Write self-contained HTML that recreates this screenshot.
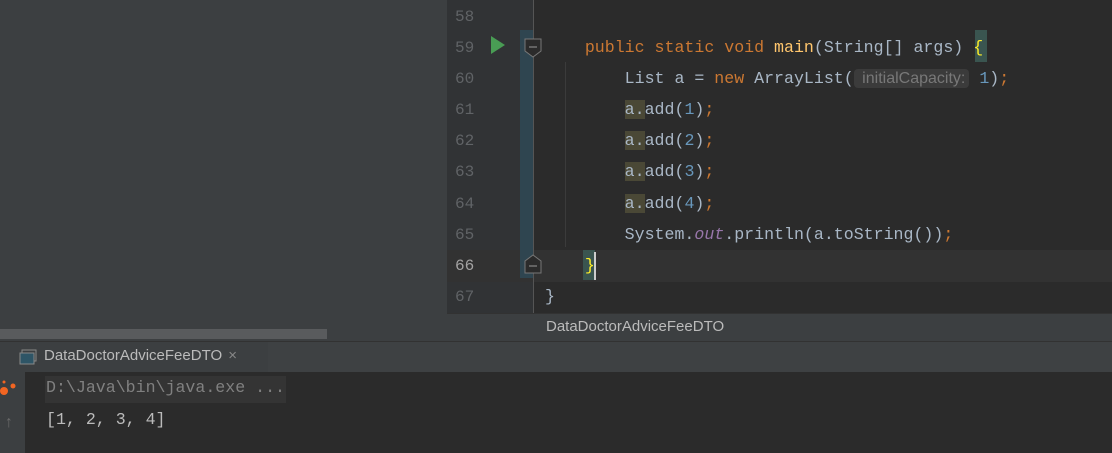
<!DOCTYPE html>
<html><head><style>
body{margin:0;width:1112px;height:453px;overflow:hidden;background:#2b2b2b;position:relative;font-family:"Liberation Mono",monospace}
div{position:absolute;box-sizing:border-box}
.ln{left:446px;width:60px;color:#606366;font-size:16px;text-align:left;padding-left:9px}
.cl{font-size:16.6px;color:#a9b7c6;white-space:pre;left:545px}
.k{color:#cc7832}.n{color:#6897bb}.f{color:#ffc66d}
.hl{background:#4a4836}
</style></head><body>
<div style="left:0;top:0;width:447px;height:341px;background:#3c3f41"></div>
<div style="left:0;top:329px;width:327px;height:10px;background:#595b5d"></div>
<div style="left:447px;top:0;width:86px;height:313px;background:#313335"></div>
<div style="left:447px;top:250px;width:665px;height:32px;background:#323232"></div>
<div style="left:520px;top:30px;width:13px;height:248px;background:#2f4550"></div>
<div style="left:533px;top:0;width:1px;height:313px;background:#555"></div>
<div style="left:565px;top:62px;width:1px;height:185px;background:#3b3b3b"></div>
<div style="left:583px;top:250px;width:12px;height:30px;background:#3a5550"></div>
<div style="left:594px;top:252px;width:2px;height:28px;background:#ccc"></div>
<div style="left:975px;top:30px;width:12px;height:32px;background:#3a5550"></div>
<svg style="position:absolute;left:490px;top:36px" width="16" height="18"><polygon points="1,0 15,9 1,18" fill="#499c54"/></svg>
<svg style="position:absolute;left:524px;top:38px" width="18" height="20"><path d="M1,1H17V13L9,19L1,13Z" fill="#2b2b2b" stroke="#777"/><line x1="5" y1="9" x2="13" y2="9" stroke="#999"/></svg>
<svg style="position:absolute;left:524px;top:254px" width="18" height="20"><path d="M1,19H17V7L9,1L1,7Z" fill="#2b2b2b" stroke="#777"/><line x1="5" y1="12" x2="13" y2="12" stroke="#999"/></svg>
<div class="ln" style="top:8px">58</div>
<div class="ln" style="top:39px">59</div>
<div class="ln" style="top:70px">60</div>
<div class="ln" style="top:101px">61</div>
<div class="ln" style="top:132px">62</div>
<div class="ln" style="top:163px">63</div>
<div class="ln" style="top:195px">64</div>
<div class="ln" style="top:226px">65</div>
<div class="ln" style="top:257px;color:#a4a3a3">66</div>
<div class="ln" style="top:288px">67</div>
<div class="cl" style="top:38px">    <span class="k">public static void </span><span class="f">main</span>(String[] args) <span style="color:#ffef28">{</span></div>
<div class="cl" style="top:69px">        List a = <span class="k">new </span>ArrayList(<span style="font-family:'Liberation Sans',sans-serif;font-size:16px;color:#787878;background:#3b3b3b;border-radius:4px;padding:1px 4px"> initialCapacity:</span> <span class="n">1</span>)<span class="k">;</span></div>
<div class="cl" style="top:100px">        <span class="hl">a.</span>add(<span class="n">1</span>)<span class="k">;</span></div>
<div class="cl" style="top:131px">        <span class="hl">a.</span>add(<span class="n">2</span>)<span class="k">;</span></div>
<div class="cl" style="top:162px">        <span class="hl">a.</span>add(<span class="n">3</span>)<span class="k">;</span></div>
<div class="cl" style="top:194px">        <span class="hl">a.</span>add(<span class="n">4</span>)<span class="k">;</span></div>
<div class="cl" style="top:225px">        System.<i style="color:#9876aa">out</i>.println(a.toString())<span class="k">;</span></div>
<div class="cl" style="top:256px">    <span style="color:#ffef28">}</span></div>
<div class="cl" style="top:287px">}</div>
<div style="left:447px;top:313px;width:665px;height:28px;background:#3c3f41;border-top:1px solid #323232;font-family:'Liberation Sans',sans-serif;font-size:15px;color:#bbb;padding:4px 0 0 99px">DataDoctorAdviceFeeDTO</div>
<div style="left:0;top:341px;width:1112px;height:31px;background:#3e4143;border-top:1px solid #323232"></div>
<div style="left:0;top:342px;width:268px;height:30px;background:#3c3f41"></div>
<svg style="position:absolute;left:19px;top:349px" width="18" height="16"><rect x="3" y="1" width="14" height="11" fill="none" stroke="#888"/><rect x="1" y="4" width="14" height="11" fill="#2e5566" stroke="#888"/></svg>
<div style="left:44px;top:347px;font-family:'Liberation Sans',sans-serif;font-size:15px;color:#bbb">DataDoctorAdviceFeeDTO <span style="color:#888;margin-left:2px">×</span></div>
<div style="left:0;top:372px;width:25px;height:81px;background:#3c3f41"></div>
<svg style="position:absolute;left:0;top:378px" width="20" height="20"><circle cx="4" cy="13" r="4" fill="#f26522"/><circle cx="13" cy="8" r="2.5" fill="#f26522"/><circle cx="4" cy="4" r="1.5" fill="#f26522"/></svg>
<div style="left:4px;top:414px;color:#6a6a6a;font-size:16px">↑</div>
<div style="left:45px;top:376px;width:241px;height:27px;background:#343434"></div>
<div style="left:46px;top:378px;font-size:16.6px;color:#808080;white-space:pre">D:\Java\bin\java.exe ...</div>
<div style="left:46px;top:410px;font-size:16.6px;color:#bbb;white-space:pre">[1, 2, 3, 4]</div>
</body></html>
